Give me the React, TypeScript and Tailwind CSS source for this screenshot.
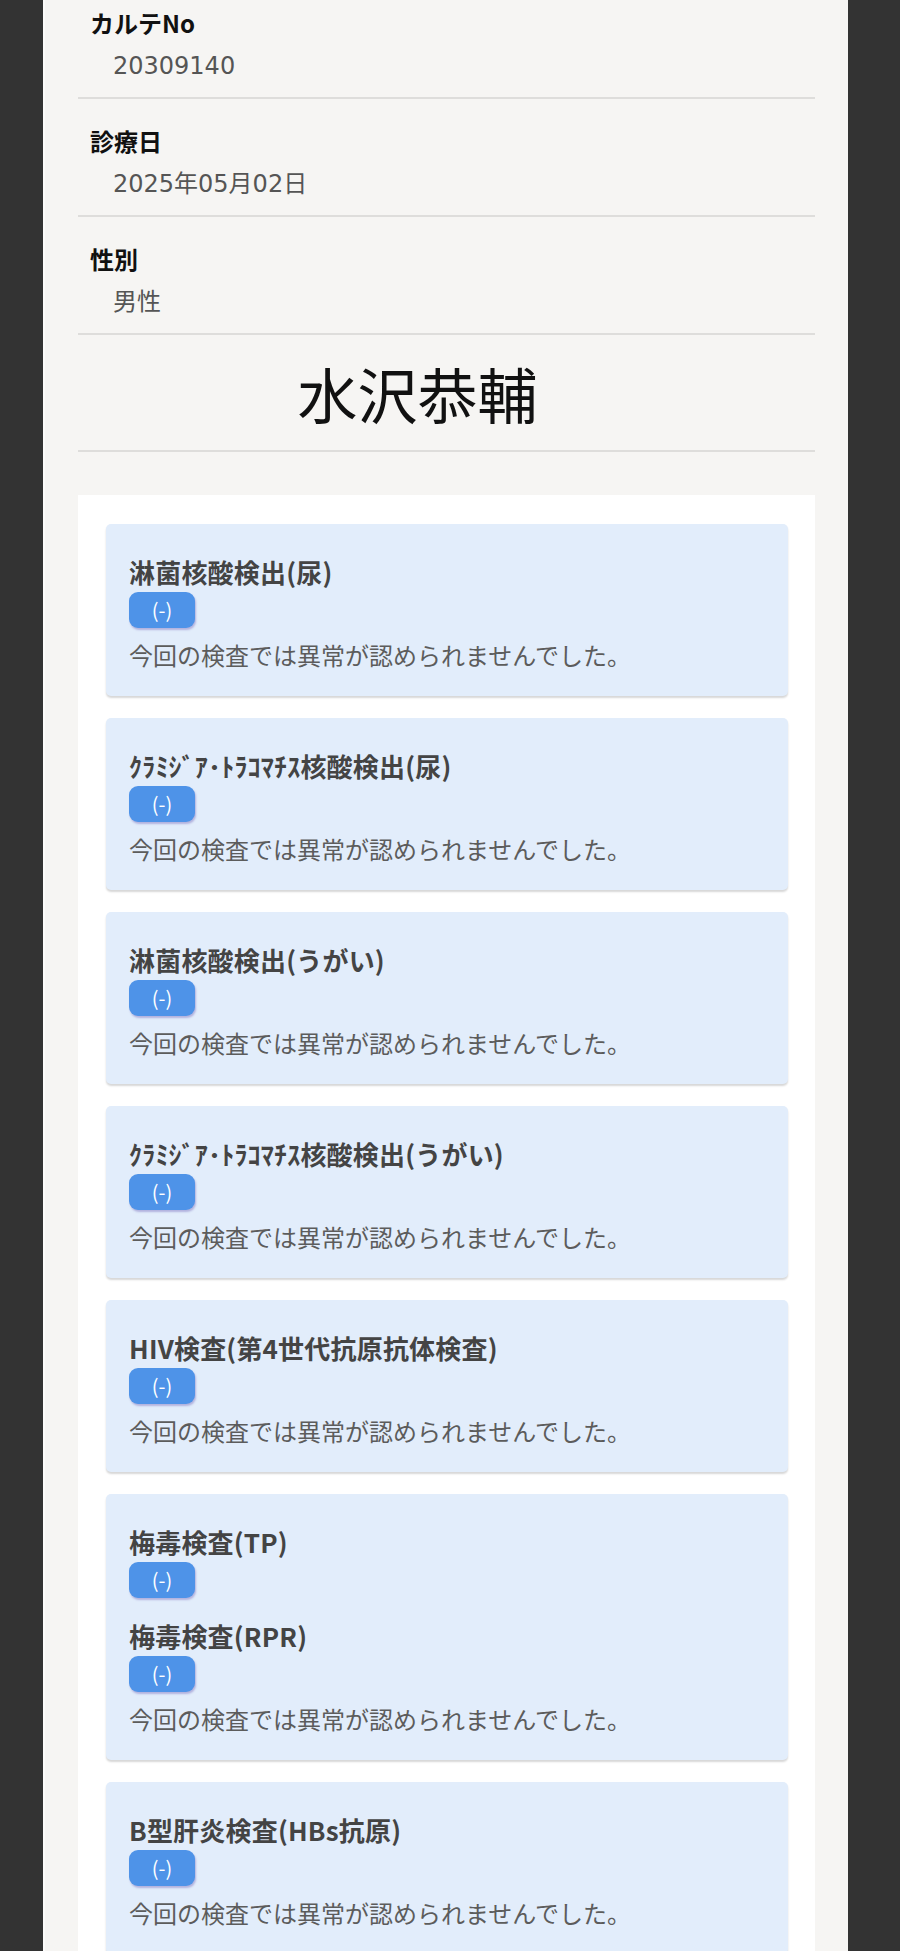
import React from 'react'

const font = { fontFamily: '"Noto Sans CJK JP", "Noto Sans", sans-serif' }
// 数字は幅の広い DejaVu に寄せる
const wideFont = { fontFamily: '"DejaVu Sans", "Noto Sans CJK JP", sans-serif' }

const fields = [
  { label: 'カルテNo', value: '20309140' },
  { label: '診療日', value: '2025年05月02日' },
  { label: '性別', value: '男性' },
]

const results: string[][] = [
  ['淋菌核酸検出(尿)'],
  ['ｸﾗﾐｼﾞｱ･ﾄﾗｺﾏﾁｽ核酸検出(尿)'],
  ['淋菌核酸検出(うがい)'],
  ['ｸﾗﾐｼﾞｱ･ﾄﾗｺﾏﾁｽ核酸検出(うがい)'],
  ['HIV検査(第4世代抗原抗体検査)'],
  ['梅毒検査(TP)', '梅毒検査(RPR)'],
  ['B型肝炎検査(HBs抗原)'],
]

const Badge = () => (
  <div className="mt-[3px] flex h-[36px] w-[66px] items-center justify-center rounded-[9px] bg-[#4e93e8] text-[20px] leading-none text-white shadow-[1px_2px_2px_rgba(90,70,170,0.35)]">
    (-)
  </div>
)

const ResultCard = ({ tests }: { tests: string[] }) => (
  <div className="rounded-[5px] bg-[#e2edfb] pl-[23px] pr-4 pt-[31px] pb-[24px] shadow-[0_2px_2px_rgba(0,0,0,0.16)]">
    {tests.map((name, i) => (
      <div key={name} className={i > 0 ? 'mt-[21px]' : ''}>
        <p className="text-[26px] font-bold leading-[34px] tracking-[0.2px] text-[#444444]">{name}</p>
        <Badge />
      </div>
    ))}
    <p className="mt-[10px] text-[24px] leading-[34px] text-[#5c5c5c]">
      今回の検査では異常が認められませんでした。
    </p>
  </div>
)

export default function App() {
  return (
    <div className="h-[1951px] overflow-hidden bg-[#333333] pl-[43px] pr-[52px]" style={font}>
      <div className="min-h-full border-l-2 border-[#fbfbfa] bg-[#f6f5f3] px-[33px]">
        {fields.map((f, i) => (
          <div
            key={f.label}
            className={`border-b-2 border-[#dedddb] pl-[12px] pb-[16px] ${i === 0 ? 'pt-[8px]' : 'pt-[27px]'}`}
          >
            <p className="text-[24px] font-bold leading-[30px] text-[#111111]">{f.label}</p>
            <p className="mt-[13px] pl-[23px] text-[24px] leading-[30px] text-[#555555]" style={wideFont}>
              {f.value}
            </p>
          </div>
        ))}

        <div className="flex h-[117px] items-center justify-center border-b-2 border-[#dedddb] pr-[58px]">
          <span className="text-[60px] leading-none text-[#111111]">水沢恭輔</span>
        </div>

        <div className="mt-[43px] flex flex-col gap-[22px] bg-white pl-[28px] pr-[27px] pt-[29px] pb-8">
          {results.map((tests) => (
            <ResultCard key={tests.join()} tests={tests} />
          ))}
        </div>
      </div>
    </div>
  )
}
